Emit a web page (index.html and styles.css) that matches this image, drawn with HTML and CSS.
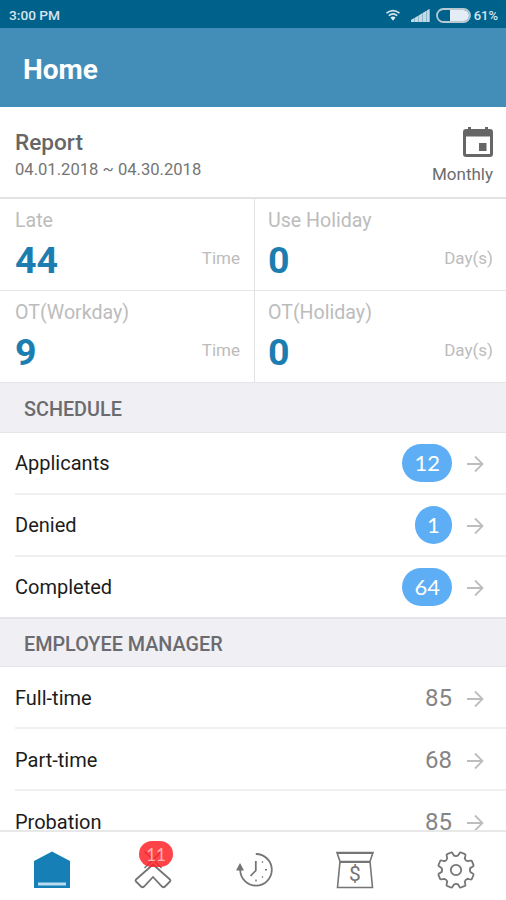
FILE: index.html
```html
<!DOCTYPE html>
<html lang="en">
<head>
    <meta charset="UTF-8">
    <meta name="viewport" content="width=device-width, initial-scale=1.0">
    <title>Home</title>
    <link rel="stylesheet" href="styles.css">
</head>
<body>
    <svg width="0" height="0" class="defs">
        <symbol id="arrow" viewBox="0 0 18 18">
            <path d="M1 9h15M9 1.500L16.500 9L9 16.500" fill="none" stroke="#bdbdbd" stroke-width="1.800"/>
        </symbol>
    </svg>

    <div class="status-bar">
        <span class="time">3:00 PM</span>
        <svg class="wifi" width="16" height="12" viewBox="0 0 16 12">
            <path d="M1.500 4.200Q8 -1 14.500 4.200M3.800 6.600Q8 3 12.200 6.600" fill="none" stroke="#cfe2ec" stroke-width="1.700"/>
            <path d="M5.500 8.500L8 11.800L10.500 8.500Q8 6.600 5.500 8.500z" fill="#e3eef4"/>
        </svg>
        <svg class="signal" width="19" height="13" viewBox="0 0 19 13">
            <path d="M0 13V11L18.500 0V13z" fill="#8fb8cc"/>
            <path d="M0 13V11L3 9.600V13zM4 13V9L7 7V13zM8 13V6.600L11 4.600V13zM12 13V4L15 2V13zM16 13V1.500L18.500 0V13z" fill="#c3d9e4"/>
        </svg>
        <svg class="battery" width="35" height="15" viewBox="0 0 35 15">
            <rect x="1" y="1" width="33" height="13" rx="6.500" fill="none" stroke="#b9c9d3" stroke-width="1.800"/>
            <path d="M14 2H27.500A5.500 5.500 0 0 1 27.500 13H14z" fill="#e4edf5"/>
        </svg>
        <span class="percent">61%</span>
    </div>

    <header>
        <h1>Home</h1>
    </header>

    <main>
        <section class="report">
            <div class="report-info">
                <h2>Report</h2>
                <p>04.01.2018 ~ 04.30.2018</p>
            </div>
            <div class="period">
                <svg width="30" height="30" viewBox="0 0 30 30">
                    <path d="M5 0h3v2h14V0h3v2h2a3 3 0 0 1 3 3v22a3 3 0 0 1-3 3H3a3 3 0 0 1-3-3V5a3 3 0 0 1 3-3h2zM3 9.500v17.500h24V9.500z" fill="#666" fill-rule="evenodd"/>
                    <rect x="16" y="16" width="7.500" height="8" fill="#666"/>
                </svg>
                <span>Monthly</span>
            </div>
        </section>

        <section class="stats">
            <div class="stat">
                <h3>Late</h3>
                <div class="value"><strong>44</strong><span>Time</span></div>
            </div>
            <div class="stat">
                <h3>Use Holiday</h3>
                <div class="value"><strong>0</strong><span>Day(s)</span></div>
            </div>
            <div class="stat">
                <h3>OT(Workday)</h3>
                <div class="value"><strong>9</strong><span>Time</span></div>
            </div>
            <div class="stat">
                <h3>OT(Holiday)</h3>
                <div class="value"><strong>0</strong><span>Day(s)</span></div>
            </div>
        </section>

        <h4 class="section-title schedule-title">SCHEDULE</h4>
        <ul class="list">
            <li><span class="label">Applicants</span><span class="badge">12</span><svg class="arrow"><use href="#arrow"/></svg></li>
            <li><span class="label">Denied</span><span class="badge">1</span><svg class="arrow"><use href="#arrow"/></svg></li>
            <li><span class="label">Completed</span><span class="badge">64</span><svg class="arrow"><use href="#arrow"/></svg></li>
        </ul>

        <h4 class="section-title">EMPLOYEE MANAGER</h4>
        <ul class="list employees">
            <li><span class="label">Full-time</span><span class="count">85</span><svg class="arrow"><use href="#arrow"/></svg></li>
            <li><span class="label">Part-time</span><span class="count">68</span><svg class="arrow"><use href="#arrow"/></svg></li>
            <li><span class="label">Probation</span><span class="count">85</span><svg class="arrow"><use href="#arrow"/></svg></li>
        </ul>
    </main>

    <nav>
        <!-- Home -->
        <a class="tab">
            <svg viewBox="0 0 40 40">
                <path d="M2 11L20 1.500L38 11V38H2z" fill="#1680b6"/>
                <path d="M6 34h28" stroke="#b9dcf2" stroke-width="3"/>
            </svg>
        </a>
        <!-- Approvals -->
        <a class="tab">
            <svg viewBox="0 0 40 40">
                <path d="M11.500 1.500L28.500 18M28.500 1.500L11.500 18" fill="none" stroke="#757575" stroke-width="1.500"/>
                <path d="M20 14.500L37 29.500Q38 30.500 37 31.500L32 36.500Q30.500 38 29 36.500L20 27L11 36.500Q9.500 38 8 36.500L3 31.500Q2 30.500 3 29.500z" fill="#fff" stroke="#757575" stroke-width="1.800"/>
            </svg>
            <span class="tab-badge">11</span>
        </a>
        <!-- History -->
        <a class="tab">
            <svg viewBox="0 0 40 40">
                <path d="M21.800 4A15.800 15.800 0 1 1 6.200 20" fill="none" stroke="#757575" stroke-width="1.800"/>
                <path d="M2 20.500L6 13L10 20.500z" fill="#757575"/>
                <path d="M21.800 11V20.500L16.500 26" fill="none" stroke="#757575" stroke-width="1.800"/>
                <path d="M28 12.500l1-1M31 19.700h2M28 26.500l1 1M22 29.500v2" stroke="#757575" stroke-width="1.400"/>
            </svg>
        </a>
        <!-- Payroll -->
        <a class="tab">
            <svg viewBox="0 0 40 40">
                <path d="M2 2.500H38L35 11.500H5zM5 11.500H35L37.500 37.500H2.500z" fill="none" stroke="#757575" stroke-width="1.600"/>
                <path d="M2 3H38M5 12H35" stroke="#757575" stroke-width="1.800"/>
                <text class="dollar" x="20" y="31" text-anchor="middle">$</text>
            </svg>
        </a>
        <!-- Settings -->
        <a class="tab">
            <svg viewBox="-20 -20 40 40">
                <g fill="none" stroke="#757575" stroke-width="1.800" stroke-linecap="round" stroke-linejoin="round">
                    <path id="tooth" d="M-2 -14.400Q0 -13.200 2 -14.400L3.700 -17Q4.200 -17.800 5 -17.500L9 -15.800Q9.700 -15.400 9.500 -14.600L8.770 -11.600"/>
                    <use href="#tooth" transform="rotate(45)"/>
                    <use href="#tooth" transform="rotate(90)"/>
                    <use href="#tooth" transform="rotate(135)"/>
                    <use href="#tooth" transform="rotate(180)"/>
                    <use href="#tooth" transform="rotate(225)"/>
                    <use href="#tooth" transform="rotate(270)"/>
                    <use href="#tooth" transform="rotate(315)"/>
                    <circle r="5.200"/>
                </g>
            </svg>
        </a>
    </nav>
</body>
</html>
```
FILE: styles.css
```css
* {
    box-sizing: border-box;
    margin: 0;
    padding: 0;
}

body {
    font-family: Roboto, sans-serif;
    background-color: #fff;
    height: 900px;
    display: flex;
    flex-direction: column;
    overflow: hidden;
}

svg {
    display: block;
    flex-shrink: 0;
}

.defs {
    position: absolute;
}

.status-bar {
    height: 28px;
    flex-shrink: 0;
    background: #00628b;
    color: #d5e5ee;
    font-size: 13px;
    font-weight: 500;
    display: flex;
    align-items: center;
    padding: 2px 8px 0 9px;
}

.time {
    flex: 1;
    font-size: 13.7px;
}

.signal {
    margin-left: 10px;
}

.battery {
    margin: 0 3px 0 6px;
}

header {
    height: 79px;
    flex-shrink: 0;
    background: #438db9;
    color: #fff;
    display: flex;
    align-items: center;
    padding: 5px 23px 0;
}

h1 {
    font-size: 28px;
    font-weight: 700;
    line-height: 34px;
}

main {
    flex: 1;
    min-height: 0;
    overflow: hidden;
}

.report {
    height: 92px;
    display: flex;
    justify-content: space-between;
    padding: 20px 13px 0 15px;
    border-bottom: 2px solid #e2e2e2;
}

.report h2 {
    font-size: 22.6px;
    font-weight: 500;
    line-height: 31px;
    color: #666;
}

.report p {
    font-size: 16.6px;
    line-height: 23px;
    color: #757575;
}

.period {
    display: flex;
    flex-direction: column;
    align-items: flex-end;
    font-size: 17px;
    line-height: 22px;
    color: #6c6c6c;
}

.period span {
    margin-top: 6px;
}

.stats {
    display: grid;
    grid-template-columns: 255px 1fr;
    grid-template-rows: 92px 91px;
}

.stat {
    padding: 9px 13px 0;
    border-bottom: 1px solid #e6e6e6;
}

.stat:nth-child(odd) {
    padding-left: 15px;
    padding-right: 14px;
    border-right: 1px solid #e2e2e2;
}

.stat:nth-child(n+3) {
    border-bottom: none;
}

.stat h3 {
    font-size: 19.6px;
    font-weight: 400;
    line-height: 26px;
    color: #bcbcbc;
}

.value {
    display: flex;
    justify-content: space-between;
    line-height: 48px;
    margin-top: 2px;
}

.value strong {
    font-size: 37.5px;
    font-weight: 700;
    color: #1c7eb0;
}

.value span {
    font-size: 17px;
    line-height: 45px;
    color: #bcbcbc;
}

.section-title {
    height: 50px;
    background: #efeff4;
    border-top: 2px solid #e5e5e9;
    border-bottom: 1px solid #e5e5e9;
    padding: 2px 24px 0;
    font-size: 19.8px;
    font-weight: 500;
    line-height: 48px;
    color: #6b6b6f;
}

.schedule-title {
    height: 51px;
    border-top-width: 1px;
    line-height: 50px;
}

.list {
    list-style: none;
    margin-left: 15px;
}

.list li {
    height: 62px;
    display: flex;
    align-items: center;
    border-bottom: 2px solid #efeff1;
    padding-right: 22px;
}

.list li:last-child {
    height: 60px;
    border-bottom: none;
}

.employees li {
    padding-top: 1px;
}

.employees li:last-child {
    height: 61px;
}

.label {
    flex: 1;
    font-size: 20px;
    color: #1c1c1c;
}

.badge {
    min-width: 37px;
    height: 38px;
    border-radius: 19px;
    padding: 0 12px;
    background: #5eaef6;
    color: #fff;
    font-family: Lato, sans-serif;
    font-size: 22px;
    line-height: 37px;
    text-align: center;
}

.count {
    font-size: 24px;
    color: #858585;
}

.arrow {
    width: 18px;
    height: 18px;
    margin: 2px 0 0 14px;
}

nav {
    height: 70px;
    flex-shrink: 0;
    background: #fff;
    border-top: 2px solid #e8e8e8;
    display: flex;
    padding: 18px 0 0 1px;
}

.tab {
    flex: 1;
    display: flex;
    justify-content: center;
    position: relative;
}

.tab svg {
    width: 40px;
    height: 40px;
}

.tab-badge {
    position: absolute;
    top: -9px;
    left: 37px;
    width: 34px;
    height: 26px;
    border-radius: 13px;
    background: rgba(255, 32, 38, 0.84);
    color: #ffb3b5;
    font-family: Lato, sans-serif;
    font-size: 17px;
    line-height: 27px;
    text-align: center;
}

.dollar {
    font-size: 21px;
    fill: #757575;
}
```
